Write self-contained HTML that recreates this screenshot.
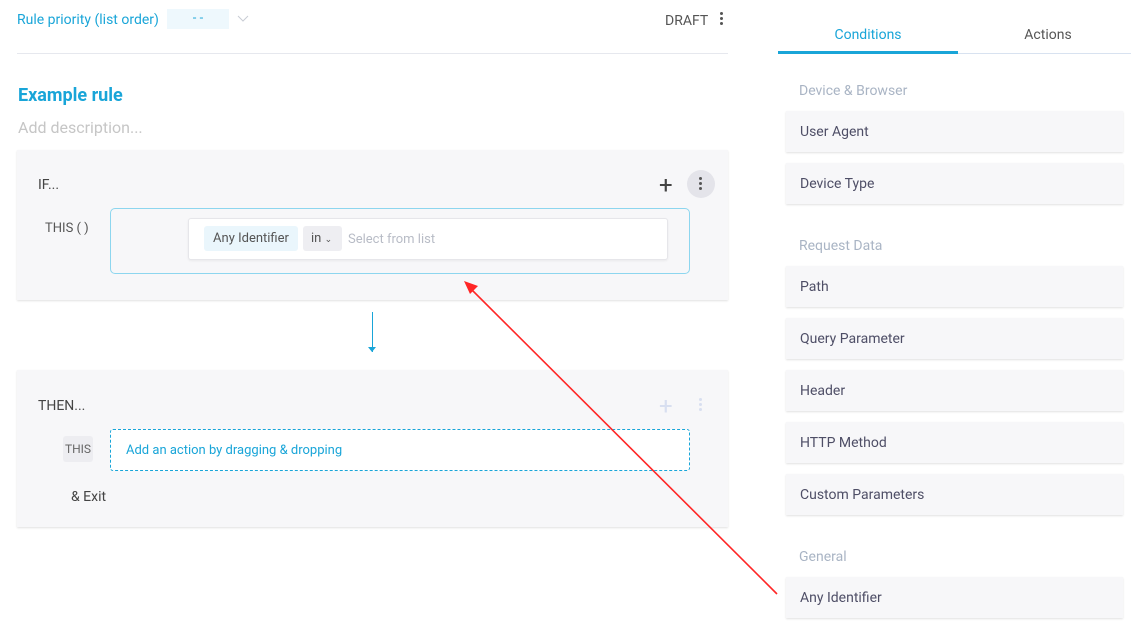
<!DOCTYPE html>
<html><head><meta charset="utf-8"><style>
body{margin:0;width:1131px;height:631px;background:#fff;font-family:Roboto,"Liberation Sans",sans-serif;position:relative;overflow:hidden}
.a{position:absolute}
.card{position:absolute;left:786px;width:337px;height:41px;background:#f7f7f9;box-shadow:0 1px 2px rgba(0,0,0,.12);font-size:14px;color:#4e4e66;line-height:43px;text-indent:14px}
.sec{position:absolute;left:799px;font-size:14px;color:#a9b4c4}
.dots span{display:block;width:3px;height:3px;border-radius:50%;background:#555;margin:2px auto}
</style></head><body>
<div class="a" style="left:17px;top:12px;font-size:14px;color:#19a5d8">Rule priority (list order)</div>
<div class="a" style="left:167px;top:9px;width:62px;height:20px;background:#eef8fd;color:#19a5d8;font-size:13px;text-align:center;line-height:20px">- -</div>
<svg class="a" style="left:237px;top:15px" width="12" height="8"><path d="M1 1l5 5 5-5" stroke="#c8ccd4" fill="none"/></svg>
<div class="a" style="left:665px;top:13px;font-size:14px;color:#555">DRAFT</div>
<div class="a dots" style="left:720px;top:10px"><span></span><span></span><span></span></div>
<div class="a" style="left:17px;top:53px;width:711px;height:1px;background:#e6e8ee"></div>
<div class="a" style="left:18px;top:85px;font-size:18px;font-weight:bold;color:#19a5d8">Example rule</div>
<div class="a" style="left:18px;top:118px;font-size:16px;color:#c6c6c6">Add description...</div>

<div class="a" style="left:17px;top:150px;width:711px;height:150px;background:#f7f7f9;box-shadow:0 1px 2px rgba(0,0,0,.12)"></div>
<div class="a" style="left:38px;top:177px;font-size:14px;color:#444">IF...</div>
<div class="a" style="left:659px;top:171px;font-size:24px;color:#444;line-height:28px">+</div>
<div class="a" style="left:687px;top:170px;width:28px;height:28px;border-radius:50%;background:#e4e4ea"></div>
<div class="a dots" style="left:699px;top:175px"><span></span><span></span><span></span></div>
<div class="a" style="left:45px;top:221px;font-size:13px;color:#555">THIS ( )</div>
<div class="a" style="left:110px;top:208px;width:578px;height:64px;border:1px solid #8dd6ef;border-radius:5px;background:#f7f7f9"></div>
<div class="a" style="left:188px;top:218px;width:478px;height:40px;background:#fff;border:1px solid #e6e6ea;border-radius:3px;box-shadow:0 1px 2px rgba(0,0,0,.06)"></div>
<div class="a" style="left:204px;top:226px;width:94px;height:25px;background:#eaf6fc;border-radius:3px;font-size:13px;color:#555;line-height:26px;text-align:center">Any Identifier</div>
<div class="a" style="left:303px;top:226px;width:39px;height:25px;background:#eeeef2;border-radius:3px;font-size:13px;color:#555;line-height:26px;text-indent:8px">in <span style="font-size:9px">⌄</span></div>
<div class="a" style="left:348px;top:232px;font-size:13px;color:#b8bcc6">Select from list</div>

<div class="a" style="left:372px;top:312px;width:1px;height:40px;background:#19a5d8"></div>
<svg class="a" style="left:368px;top:347px" width="9" height="6"><path d="M0 0h8L4 5z" fill="#19a5d8"/></svg>

<div class="a" style="left:17px;top:370px;width:711px;height:157px;background:#f7f7f9;box-shadow:0 1px 2px rgba(0,0,0,.12)"></div>
<div class="a" style="left:38px;top:398px;font-size:14px;color:#444">THEN...</div>
<div class="a" style="left:659px;top:392px;font-size:24px;color:#d8dff0;line-height:28px">+</div>
<div class="a dots" style="left:699px;top:396px"><span style="background:#d8dff0"></span><span style="background:#d8dff0"></span><span style="background:#d8dff0"></span></div>
<div class="a" style="left:63px;top:436px;width:30px;height:26px;background:#ededf1;border-radius:3px;font-size:12px;color:#666;line-height:26px;text-align:center">THIS</div>
<div class="a" style="left:110px;top:429px;width:578px;height:40px;border:1px dashed #19a5d8;border-radius:3px;background:#fff"></div>
<div class="a" style="left:126px;top:443px;font-size:13px;color:#19a5d8">Add an action by dragging &amp; dropping</div>
<div class="a" style="left:71px;top:489px;font-size:14px;color:#444">&amp; Exit</div>

<div class="a" style="left:778px;top:27px;width:180px;text-align:center;font-size:14px;color:#19a5d8">Conditions</div>
<div class="a" style="left:958px;top:27px;width:180px;text-align:center;font-size:14px;color:#555">Actions</div>
<div class="a" style="left:778px;top:53px;width:353px;height:1px;background:#d8e2f0"></div>
<div class="a" style="left:778px;top:51px;width:180px;height:3px;background:#19a5d8"></div>
<div class="sec" style="top:83px">Device &amp; Browser</div>
<div class="card" style="top:111px">User Agent</div>
<div class="card" style="top:163px">Device Type</div>
<div class="sec" style="top:238px">Request Data</div>
<div class="card" style="top:266px">Path</div>
<div class="card" style="top:318px">Query Parameter</div>
<div class="card" style="top:370px">Header</div>
<div class="card" style="top:422px">HTTP Method</div>
<div class="card" style="top:474px">Custom Parameters</div>
<div class="sec" style="top:549px">General</div>
<div class="card" style="top:577px">Any Identifier</div>

<svg class="a" style="left:0;top:0" width="1131" height="631"><line x1="777" y1="594" x2="470" y2="288" stroke="#ff2626" stroke-width="1.6"/><path d="M464 281l14 5-8 8z" fill="#ff2626"/></svg>
</body></html>
